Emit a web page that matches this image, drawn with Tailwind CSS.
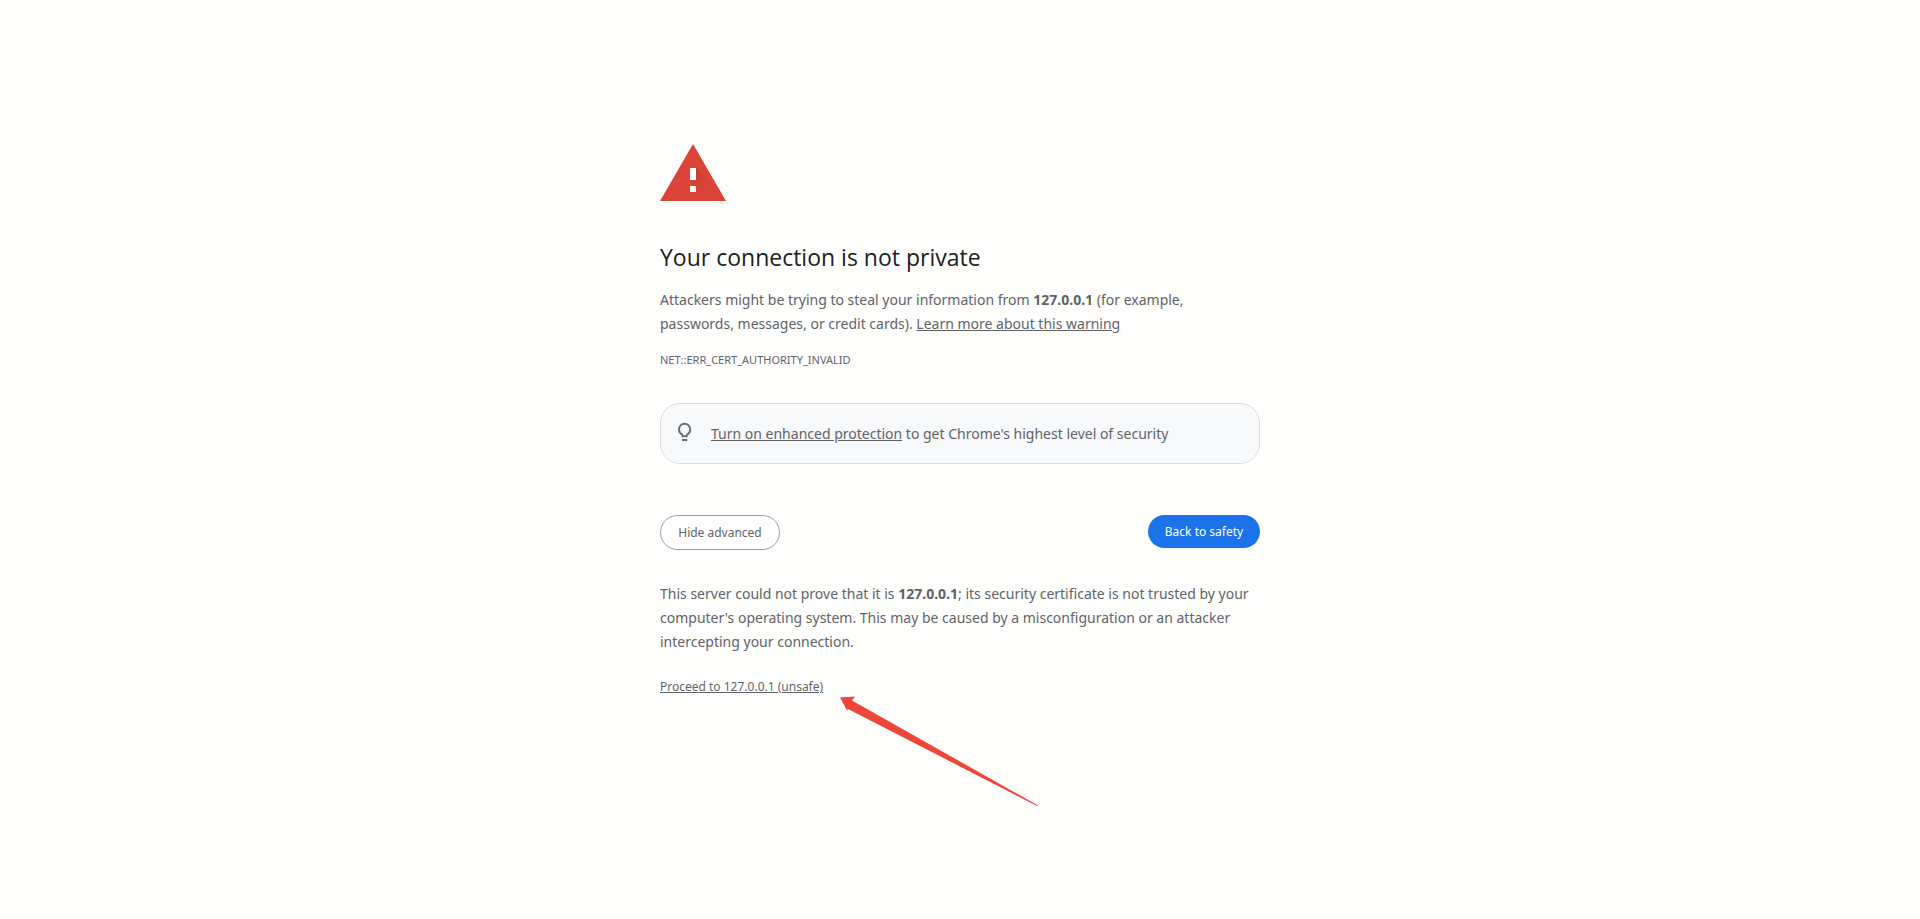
<!DOCTYPE html>
<html lang="en">
<head>
<meta charset="utf-8">
<meta name="viewport" content="width=device-width, initial-scale=1">
<title>Privacy error</title>
<script src="https://cdn.jsdelivr.net/npm/@tailwindcss/browser@4"></script>
</head>
<body class="min-h-screen bg-[#fffffe] font-['Segoe_UI','Noto_Sans',sans-serif] text-sm leading-6 text-[#5f6368]">
<main class="mx-auto w-full max-w-[600px] pt-36">
  <svg class="h-[57px] w-[66px]" viewBox="0 0 66 57" role="img" aria-label="Warning">
    <defs>
      <linearGradient id="shade" gradientUnits="userSpaceOnUse" x1="32" y1="30" x2="50" y2="48">
        <stop offset="0" stop-color="#b03a30" stop-opacity=".7"/>
        <stop offset=".5" stop-color="#c23f34" stop-opacity=".25"/>
        <stop offset="1" stop-color="#c23f34" stop-opacity="0"/>
      </linearGradient>
    </defs>
    <path d="M33 0 66 57H0Z" fill="#db4437"/>
    <path d="M36 24 64 52V57H39L30 48 36 42 30 36Z" fill="url(#shade)"/>
    <path d="M30 24h6v12h-6zM30 42h6v6h-6z" fill="#fff"/>
  </svg>
  <h1 class="mt-10 font-['Segoe_UI','Open_Sans',sans-serif] text-[23px] leading-8 text-[#202124]">Your connection is not private</h1>
  <p class="mt-[15px]">Attackers might be trying to steal your information from <strong>127.0.0.1</strong> (for example,<br>passwords, messages, or credit cards). <a href="#" class="underline">Learn more about this warning</a></p>
  <p class="mt-3 text-[11px] leading-6">NET::ERR_CERT_AUTHORITY_INVALID</p>
  <div class="mt-[31px] flex items-start gap-4 rounded-[20px] border border-[#dadce0] bg-[#f8f9fa] px-[15px] pt-[18px] pb-[17px]">
    <svg class="h-5 w-[19px] shrink-0" viewBox="0 0 19 20" fill="none" stroke="#6a6d71" aria-hidden="true">
      <path d="M6.4 14.2V12.8C4.4 11.7 3 9.7 3 7.4a5.6 5.6 0 0 1 11.2 0c0 2.3-1.4 4.3-3.4 5.4v1.4z" stroke-width="1.9" stroke-linejoin="round"/>
      <path d="M6 18h5.2" stroke-width="2"/>
    </svg>
    <p><a href="#" class="underline">Turn on enhanced protection</a> to get Chrome's highest level of security</p>
  </div>
  <div class="mt-[51px] flex items-start justify-between text-xs leading-[17px]">
    <button type="button" class="min-w-[120px] rounded-full border border-[#9aa0a6] bg-white px-4 py-2">Hide advanced</button>
    <button type="button" class="min-w-[112px] rounded-full bg-[#1a73e8] px-4 py-2 text-white">Back to safety</button>
  </div>
  <div class="relative mt-8">
    <p>This server could not prove that it is <strong>127.0.0.1</strong>; its security certificate is not trusted by your<br>computer's operating system. This may be caused by a misconfiguration or an attacker<br>intercepting your connection.</p>
    <p class="mt-[21px] text-xs leading-6"><a href="#" class="underline">Proceed to 127.0.0.1 (unsafe)</a></p>
    <svg class="absolute top-[114px] left-[180px] h-[110px] w-[199px]" viewBox="0 0 199 110" aria-hidden="true">
      <path d="M0 1.5 15 .5 12 4.5 198 109.5 197 110 8 13 7 14.5Z" fill="#ee4639"/>
    </svg>
  </div>
</main>
</body>
</html>
